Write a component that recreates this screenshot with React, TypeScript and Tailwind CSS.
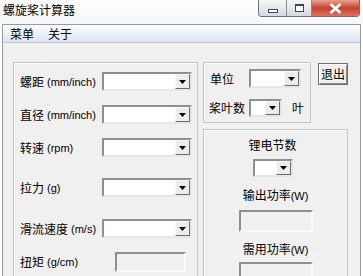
import React from "react";

const cjk = "font-['Noto_Sans_CJK_SC',sans-serif]";
const latin = "font-['Liberation_Sans','Noto_Sans_CJK_SC',sans-serif] text-[11px]";

function Arrow() {
  return (
    <svg width="7" height="4" viewBox="0 0 7 4">
      <path d="M0 0h7L3.5 4z" fill="#000" />
    </svg>
  );
}

function Combo({ w, h = 19 }: { w: number; h?: number }) {
  return (
    <div
      className="flex shrink-0 border-2 border-t-[#8f8f8f] border-l-[#8f8f8f] border-r-[#e6e6e6] border-b-[#e6e6e6] bg-white"
      style={{ width: w, height: h }}
    >
      <div className="flex-1" />
      <div className="flex w-[15px] items-center justify-center border border-t-[#f8f8f8] border-l-[#f8f8f8] border-r-[#6b6b6b] border-b-[#6b6b6b] bg-[#ececec]">
        <Arrow />
      </div>
    </div>
  );
}

function Readout({ w, h = 21 }: { w: number; h?: number }) {
  return (
    <div
      className="shrink-0 border-2 border-t-[#8f8f8f] border-l-[#8f8f8f] border-r-[#fafafa] border-b-[#fafafa] bg-[#f0f0f0]"
      style={{ width: w, height: h }}
    />
  );
}

function Label({ cn, en }: { cn: string; en?: string }) {
  return (
    <div className="flex w-[82px] shrink-0 items-center whitespace-nowrap text-[12px] leading-[14px] text-black">
      <span className={cjk}>{cn}</span>
      {en && <span className={`${latin} ml-[3px]`}>{en}</span>}
    </div>
  );
}

function Row({ cn, en, mt, out }: { cn: string; en?: string; mt: number; out?: boolean }) {
  return (
    <div className="flex items-center" style={{ marginTop: mt }}>
      <Label cn={cn} en={en} />
      {out ? <div className="ml-[13px]"><Readout w={71} h={20} /></div> : <Combo w={90} />}
    </div>
  );
}

function TitleButtons() {
  return (
    <div className="flex h-[17px] overflow-hidden rounded-b-[4px] border border-t-0 border-[#6f6f6f]">
      <div className="flex w-[28px] items-center justify-center border-r border-[#8a8a8a] bg-gradient-to-b from-[#f6f6f6] to-[#d4d9e0]">
        <div className="mt-[5px] h-[4px] w-[10px] border border-[#444] bg-white" />
      </div>
      <div className="flex w-[25px] items-center justify-center border-r border-[#8a8a8a] bg-gradient-to-b from-[#f6f6f6] to-[#d4d9e0]">
        <div className="h-[8px] w-[9px] border border-[#444] border-t-2 bg-white" />
      </div>
      <div className="flex w-[47px] items-center justify-center bg-gradient-to-b from-[#e6a08f] via-[#c63e30] to-[#d9745f]">
        <svg width="13" height="11" viewBox="0 0 13 11">
          <path d="M1.5 1l10 9M11.5 1l-10 9" stroke="#fff" strokeWidth="2.8" />
        </svg>
      </div>
    </div>
  );
}

export default function App() {
  return (
    <div className={`flex h-[276px] w-[363px] flex-col overflow-hidden bg-white ${cjk}`}>
      <div className="flex h-[24px] shrink-0 items-start justify-between bg-gradient-to-b from-[#ffffff] to-[#f4f7fb]">
        <div className="mt-[3px] pl-[3px] text-[12px] leading-[14px] text-black">螺旋桨计算器</div>
        <div className="mr-[3px]">
          <TitleButtons />
        </div>
      </div>

      <div className="mx-[2px] flex flex-1 flex-col border border-b-0 border-[#9a9a9a] bg-[#f0f0f0]">
        <div className="flex h-[18px] shrink-0 items-center border-b border-[#b9c3d1] bg-gradient-to-b from-[#fbfcfe] to-[#dde6f3] pl-[7px] text-[12px] leading-[14px]">
          <span>菜单</span>
          <span className="ml-[14px]">关于</span>
        </div>

        <div className="flex pl-[10px] pt-[19px]">
          <div className="h-[240px] w-[185px] shrink-0 border border-[#c4c4c4] pl-[6px] pt-[8px] shadow-[inset_1px_1px_0_#fff]">
            <Row cn="螺距" en="(mm/inch)" mt={1} />
            <Row cn="直径" en="(mm/inch)" mt={14} />
            <Row cn="转速" en="(rpm)" mt={14} />
            <Row cn="拉力" en="(g)" mt={21} />
            <Row cn="滑流速度" en="(m/s)" mt={22} />
            <Row cn="扭矩" en="(g/cm)" mt={14} out />
          </div>

          <div className="ml-[5px] flex flex-col">
            <div className="flex items-start">
              <div className="h-[61px] w-[108px] border border-[#c4c4c4] shadow-[inset_1px_1px_0_#fff]">
                <div className="mt-[6px] flex items-center pl-[6px]">
                  <span className="w-[39px] text-[12px] leading-[14px]">单位</span>
                  <Combo w={52} />
                </div>
                <div className="mt-[11px] flex items-center pl-[5px]">
                  <span className="w-[40px] text-[12px] leading-[14px]">桨叶数</span>
                  <Combo w={33} h={18} />
                  <span className="ml-[10px] text-[12px] leading-[14px]">叶</span>
                </div>
              </div>
              <div className="ml-[7px] mt-[1px] flex h-[22px] w-[30px] items-center justify-center border border-[#6f6f6f] bg-[#f0f0f0] text-[12px] leading-[14px] shadow-[inset_1px_1px_0_#fff,inset_-1px_-1px_0_#8a8a8a]">
                退出
              </div>
            </div>

            <div className="mt-[6px] flex h-[150px] w-[145px] flex-col items-center border border-[#c4c4c4] shadow-[inset_1px_1px_0_#fff]">
              <span className="mt-[8px] mr-[6px] text-[12px] leading-[14px]">锂电节数</span>
              <div className="mr-[6px] mt-[7px]">
                <Combo w={40} h={18} />
              </div>
              <span className="mt-[11px] text-[12px] leading-[14px]">
                输出功率<span className={latin}>(W)</span>
              </span>
              <div className="mt-[7px]">
                <Readout w={74} h={22} />
              </div>
              <span className="mt-[10px] text-[12px] leading-[14px]">
                需用功率<span className={latin}>(W)</span>
              </span>
              <div className="mt-[5px]">
                <Readout w={74} h={22} />
              </div>
            </div>
          </div>
        </div>
      </div>
    </div>
  );
}
